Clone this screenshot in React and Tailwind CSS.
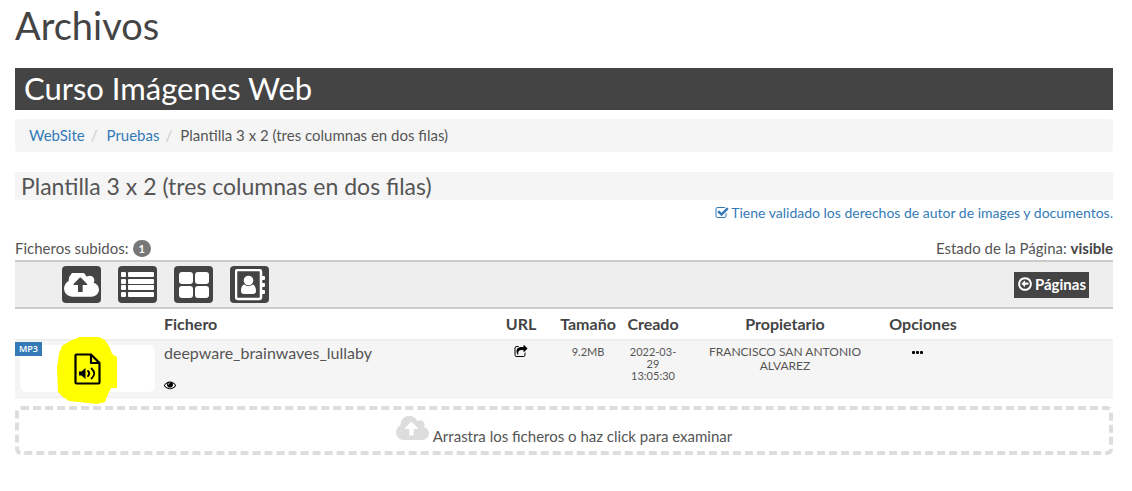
const Icon = ({ d, viewBox = "0 0 1792 1792", className }) => (
  <svg viewBox={viewBox} className={className} fill="currentColor" aria-hidden="true">
    <path d={d} />
  </svg>
);

const paths = {
  cloudUpload:
    "M1280 864q0-14-9-23l-352-352q-9-9-23-9t-23 9l-351 351q-10 12-10 24 0 14 9 23t23 9h224v352q0 13 9.5 22.5t22.5 9.5h192q13 0 22.500-9.500t9.500-22.500v-352h224q13 0 22.500-9.500t9.500-22.500zm640 288q0 159-112.500 271.500t-271.500 112.500h-1088q-185 0-316.500-131.500t-131.500-316.500q0-130 70-240t188-165q-2-30-2-43 0-212 150-362t362-150q156 0 285.500 87t188.500 231q71-62 166-62 106 0 181 75t75 181q0 76-41 138 130 31 213.500 135.500t83.500 238.500z",
  checkSquare:
    "M1472 930v318q0 119-84.500 203.500t-203.500 84.500h-832q-119 0-203.500-84.500t-84.500-203.500v-832q0-119 84.500-203.500t203.500-84.500h832q63 0 117 25 15 7 18 23 3 17-9 29l-49 49q-10 10-23 10-3 0-9-2-23-6-45-6h-832q-66 0-113 47t-47 113v832q0 66 47 113t113 47h832q66 0 113-47t47-113v-254q0-13 9-22l64-64q10-10 23-10 6 0 12 3 20 8 20 29zm231-489l-814 814q-24 24-57 24t-57-24l-430-430q-24-24-24-57t24-57l110-110q24-24 57-24t57 24l263 263 647-647q24-24 57-24t57 24l110 110q24 24 24 57t-24 57z",
  share:
    "M1472 989v259q0 119-84.500 203.500t-203.500 84.500h-832q-119 0-203.500-84.500t-84.500-203.500v-832q0-119 84.500-203.500t203.500-84.500h255q13 0 22.500 9.500t9.500 22.500q0 27-26 32-77 26-133 60-10 4-16 4h-112q-66 0-113 47t-47 113v832q0 66 47 113t113 47h832q66 0 113-47t47-113v-214q0-19 18-29 28-13 54-37 16-16 35-8 21 9 21 29zm237-496l-384 384q-18 19-45 19-12 0-25-5-39-17-39-59v-192h-160q-323 0-438 131-119 137-74 473 3 23-20 34-8 2-12 2-16 0-26-13-10-14-21-31t-39.500-68.500-49.500-99.500-38.500-114-17.500-122q0-49 3.500-91t14-90 28-88 47-81.500 68.500-74 94.500-61.500 124.500-48.500 159.500-30.500 196.500-11h160v-192q0-42 39-59 13-5 25-5 26 0 45 19l384 384q19 19 19 45t-19 45z",
  eye:
    "M1664 960q-152-236-381-353 61 104 61 225 0 185-131.500 316.500t-316.500 131.500-316.500-131.500-131.500-316.500q0-121 61-225-229 117-381 353 133 205 333.500 326.500t434.500 121.500 434.500-121.500 333.500-326.500zm-720-384q0-20-14-34t-34-14q-125 0-214.500 89.500t-89.500 214.500q0 20 14 34t34 14 34-14 14-34q0-86 61-147t147-61q20 0 34-14t14-34zm848 384q0 34-20 69-140 230-376.500 368.500t-499.500 138.500-499.500-139-376.500-368q-20-35-20-69t20-69q140-229 376.500-368t499.500-139 499.500 139 376.500 368q20 35 20 69z",
  arrowLeft:
    "M1280 832v128q0 14-9 23t-23 9h-352v192q0 14-9 23t-23 9q-12 0-24-10l-319-319q-9-9-9-23t9-23l320-320q9-9 23-9 13 0 22.500 9.500t9.500 22.500v192h352q14 0 23 9t9 23zm160 64q0-148-73-273t-198-198-273-73-273 73-198 198-73 273 73 273 198 198 273 73 273-73 198-198 73-273zm224 0q0 209-103 385.500t-279.500 279.500-385.500 103-385.500-103-279.500-279.500-103-385.500 103-385.500 279.500-279.500 385.500-103 385.500 103 279.500 279.500 103 385.500z",
};

const ListIcon = () => (
  <svg viewBox="0 0 33 26" className="h-[26px] w-[33px]" fill="currentColor" aria-hidden="true">
    {[0, 7, 13, 20].map((y) => (
      <g key={y}>
        <rect x="0" y={y} width="5" height="5" rx="1" />
        <rect x="7" y={y} width="26" height="5" rx="1" />
      </g>
    ))}
  </svg>
);

const GridIcon = () => (
  <svg viewBox="0 0 30 26" className="h-[26px] w-[30px]" fill="currentColor" aria-hidden="true">
    <rect x="0" y="0" width="14" height="12" rx="3" />
    <rect x="16" y="0" width="14" height="12" rx="3" />
    <rect x="0" y="14" width="14" height="12" rx="3" />
    <rect x="16" y="14" width="14" height="12" rx="3" />
  </svg>
);

const AddressBookIcon = () => (
  <svg viewBox="0 0 30 32" className="h-8 w-[30px]" fill="currentColor" aria-hidden="true">
    <rect x="1" y="1" width="25" height="29" rx="2" fill="none" stroke="currentColor" strokeWidth="2.5" />
    <path d="M27 7h2a1 1 0 0 1 1 1v2a1 1 0 0 1-1 1h-2zM27 14h2a1 1 0 0 1 1 1v2a1 1 0 0 1-1 1h-2zM27 21h2a1 1 0 0 1 1 1v2a1 1 0 0 1-1 1h-2z" />
    <circle cx="13.500" cy="11.500" r="4.800" />
    <path d="M9.500 15.500C7 16 6 19 6 22c0 2 1.200 3 3 3h9c1.800 0 3-1 3-3 0-3-1-6-3.500-6.500-2.300 2-5.700 2-8 0z" />
  </svg>
);

const AudioFileIcon = () => (
  <svg
    viewBox="0 0 27 32"
    className="relative h-8 w-[27px] text-black"
    fill="none"
    stroke="currentColor"
    strokeWidth="2.200"
    strokeLinejoin="round"
    aria-hidden="true"
  >
    <path d="M1.500 2.500a1 1 0 0 1 1-1H17l8.500 8.500v19.500a1 1 0 0 1-1 1h-22a1 1 0 0 1-1-1z" />
    <path d="M17 1.500V10h8.500" />
    <path d="M5 18.500h2.500l4-3.500v11l-4-3.500H5z" fill="currentColor" stroke="none" />
    <path d="M14 18q2.500 2.500 0 5M17.500 15.500q5.500 5 0 10" strokeWidth="1.800" strokeLinecap="round" />
  </svg>
);

const tools = [
  {
    label: "Subir ficheros",
    icon: <Icon d={paths.cloudUpload} viewBox="0 256 1920 1280" className="h-6 w-[35px]" />,
  },
  { label: "Ver como lista", icon: <ListIcon /> },
  { label: "Ver como cuadrícula", icon: <GridIcon /> },
  { label: "Contactos", icon: <AddressBookIcon /> },
];

const App = () => {
  return (
    <main className="bg-white pl-[15px] pr-[19px] font-['Lato',sans-serif] text-[15px] leading-5 text-[#555]">
      <h1 className="pt-[3px] text-[38px] leading-[44px] font-normal text-[#444]">Archivos</h1>

      <h2 className="mt-[21px] bg-[#444] px-[9px] pb-[2px] text-[31px] leading-10 text-white">
        Curso Imágenes Web
      </h2>

      <nav aria-label="Ruta" className="mt-[9px] rounded bg-[#f5f5f5] px-[14px] pt-[6px] pb-[7px]">
        <ol className="flex">
          <li>
            <a href="#website" className="text-[#337ab7]">WebSite</a>
            <span className="px-[6px] text-[#ccc]">/</span>
          </li>
          <li className="pl-[3px]">
            <a href="#pruebas" className="text-[#337ab7]">Pruebas</a>
            <span className="px-[6px] text-[#ccc]">/</span>
          </li>
          <li className="pl-[2px]">Plantilla 3 x 2 (tres columnas en dos filas)</li>
        </ol>
      </nav>

      <h3 className="mt-5 bg-[#f5f5f5] px-[6px] text-[23px] leading-7 text-[#555]">
        Plantilla 3 x 2 (tres columnas en dos filas)
      </h3>

      <div className="mt-[3px] flex justify-end text-sm leading-5">
        <a href="#derechos" className="flex items-center gap-[2px] text-[#337ab7]">
          <Icon d={paths.checkSquare} className="size-[14px]" />
          Tiene validado los derechos de autor de images y documentos.
        </a>
      </div>

      <div className="mt-[15px] flex justify-between pb-[2px]">
        <p className="flex items-center gap-1">
          Ficheros subidos:
          <span className="rounded-full bg-[#777] px-[6px] text-[11px] leading-[17px] font-bold text-white">
            1
          </span>
        </p>
        <p>
          Estado de la Página: <strong className="text-[#444]">visible</strong>
        </p>
      </div>

      <div className="flex items-center justify-between border-y-2 border-[#ccc] bg-[#eee] py-1 pr-6 pl-[47px]">
        <div className="flex gap-[17px]">
          {tools.map((tool) => (
            <button
              key={tool.label}
              aria-label={tool.label}
              className="flex h-[37px] w-[39px] items-center justify-center rounded bg-[#444] text-white"
            >
              {tool.icon}
            </button>
          ))}
        </div>
        <button className="flex h-[26px] items-center gap-[2px] bg-[#444] px-[3px] pb-[2px] font-bold text-white">
          <Icon d={paths.arrowLeft} className="size-4" />
          Páginas
        </button>
      </div>

      <table className="w-full table-fixed border-collapse text-center">
        <thead>
          <tr className="h-[31px] border-b-2 border-[#eee] text-base text-[#444]">
            <th className="w-[145px]" aria-label="Vista previa"></th>
            <th className="px-1 text-left">Fichero</th>
            <th className="w-[62px]">URL</th>
            <th className="w-[72px]">Tamaño</th>
            <th className="w-[58px]">Creado</th>
            <th className="w-[206px]">Propietario</th>
            <th className="w-[70px]">Opciones</th>
            <th className="w-[155px]" aria-label="Sin título"></th>
          </tr>
        </thead>
        <tbody>
          <tr className="h-[57px] border-b border-[#eee] bg-[#f5f5f5] align-top">
            <td className="pt-1 pl-[5px]">
              <div className="relative flex h-[47px] w-[135px] items-center justify-center rounded-md bg-white">
                {/* highlighter mark behind the file icon */}
                <svg
                  viewBox="0 0 61 68"
                  className="absolute -top-[9px] left-[37px] h-[68px] w-[61px]"
                  fill="#ffff00"
                  aria-hidden="true"
                >
                  <path d="M5 10L13 5L23 1H42L48 4L53 12L55 18L60 21V52H54L51 58L48 66L40 68L12 65L6 61L1 56L0 32L2 18Z" />
                </svg>
                <AudioFileIcon />
                <span className="absolute -top-[3px] -left-[5px] bg-[#337ab7] px-1 font-['Open_Sans',sans-serif] text-[9px] leading-[14px] font-semibold text-white">
                  MP3
                </span>
              </div>
            </td>
            <td className="px-1 pt-[2px] text-left">
              <p className="text-base leading-5">deepware_brainwaves_lullaby</p>
              <Icon d={paths.eye} className="mt-4 size-3 text-black" />
            </td>
            <td className="pt-1">
              <a href="#compartir" aria-label="Compartir URL" className="block text-black">
                <Icon d={paths.share} className="mx-auto size-[14px]" />
              </a>
            </td>
            <td className="pt-[5px] text-[11px] leading-3">9.2MB</td>
            <td className="pt-[5px] text-[11px] leading-3">
              2022-03-
              <br />
              29
              <br />
              13:05:30
            </td>
            <td className="px-6 pt-1 text-xs leading-[14px]">FRANCISCO SAN ANTONIO ALVAREZ</td>
            <td className="pt-[10px] pr-3">
              <button aria-label="Más opciones" className="mx-auto block text-black">
                <svg viewBox="0 0 11 3" className="h-[3px] w-[11px]" fill="currentColor" aria-hidden="true">
                  <rect x="0" width="3" height="3" rx="1" />
                  <rect x="4" width="3" height="3" rx="1" />
                  <rect x="8" width="3" height="3" rx="1" />
                </svg>
              </button>
            </td>
            <td></td>
          </tr>
        </tbody>
      </table>

      <button className="mt-2 flex h-[49px] w-full items-start justify-center gap-1 rounded-md border-4 border-dashed border-[#ddd] pt-[6px]">
        <Icon d={paths.cloudUpload} viewBox="0 256 1920 1280" className="h-[26px] w-[33px] text-[#ddd]" />
        <span className="pt-[10px]">Arrastra los ficheros o haz click para examinar</span>
      </button>
    </main>
  );
};

export default App;
